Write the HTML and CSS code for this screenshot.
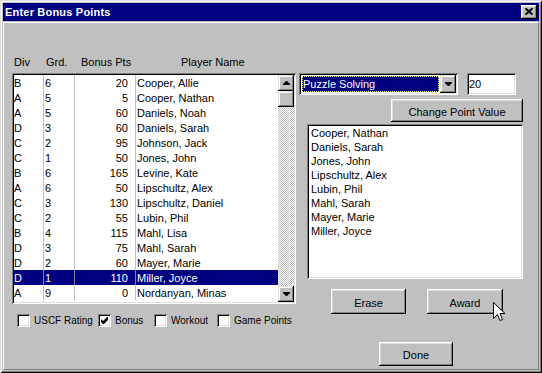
FILE: index.html
```html
<!DOCTYPE html>
<html>
<head>
<meta charset="utf-8">
<title>Enter Bonus Points</title>
<link rel="stylesheet" href="styles.css">
</head>
<body>
<div class="window">
  <div class="titlebar">
    <span class="title">Enter Bonus Points</span>
    <span class="close"><svg width="8" height="7" viewBox="0 0 8 7"><path d="M0.5 0.3 L7.5 6.7 M7.5 0.3 L0.5 6.7" stroke="#000" stroke-width="1.9" fill="none"/></svg></span>
  </div>
  <div class="client">
    <div class="left">
      <div class="hdr">
        <span class="h-div">Div</span><span class="h-grd">Grd.</span><span class="h-pts">Bonus Pts</span><span class="h-name">Player Name</span>
      </div>
      <div class="listbox">
        <div class="rows">
          <div class="row"><span class="c-div">B</span><span class="c-grd">6</span><span class="c-pts">20</span><span class="c-name">Cooper, Allie</span></div>
          <div class="row"><span class="c-div">A</span><span class="c-grd">5</span><span class="c-pts">5</span><span class="c-name">Cooper, Nathan</span></div>
          <div class="row"><span class="c-div">A</span><span class="c-grd">5</span><span class="c-pts">60</span><span class="c-name">Daniels, Noah</span></div>
          <div class="row"><span class="c-div">D</span><span class="c-grd">3</span><span class="c-pts">60</span><span class="c-name">Daniels, Sarah</span></div>
          <div class="row"><span class="c-div">C</span><span class="c-grd">2</span><span class="c-pts">95</span><span class="c-name">Johnson, Jack</span></div>
          <div class="row"><span class="c-div">C</span><span class="c-grd">1</span><span class="c-pts">50</span><span class="c-name">Jones, John</span></div>
          <div class="row"><span class="c-div">B</span><span class="c-grd">6</span><span class="c-pts">165</span><span class="c-name">Levine, Kate</span></div>
          <div class="row"><span class="c-div">A</span><span class="c-grd">6</span><span class="c-pts">50</span><span class="c-name">Lipschultz, Alex</span></div>
          <div class="row"><span class="c-div">C</span><span class="c-grd">3</span><span class="c-pts">130</span><span class="c-name">Lipschultz, Daniel</span></div>
          <div class="row"><span class="c-div">C</span><span class="c-grd">2</span><span class="c-pts">55</span><span class="c-name">Lubin, Phil</span></div>
          <div class="row"><span class="c-div">B</span><span class="c-grd">4</span><span class="c-pts">115</span><span class="c-name">Mahl, Lisa</span></div>
          <div class="row"><span class="c-div">D</span><span class="c-grd">3</span><span class="c-pts">75</span><span class="c-name">Mahl, Sarah</span></div>
          <div class="row"><span class="c-div">D</span><span class="c-grd">2</span><span class="c-pts">60</span><span class="c-name">Mayer, Marie</span></div>
          <div class="row selected"><span class="c-div">D</span><span class="c-grd">1</span><span class="c-pts">110</span><span class="c-name">Miller, Joyce</span></div>
          <div class="row"><span class="c-div">A</span><span class="c-grd">9</span><span class="c-pts">0</span><span class="c-name">Nordanyan, Minas</span></div>
        </div>
        <div class="vscroll">
          <div class="sbtn"><svg width="7" height="4" viewBox="0 0 7 4"><path d="M3 0h1l3 3v1H0V3z" fill="#000"/></svg></div>
          <div class="track"><div class="thumb"></div></div>
          <div class="sbtn"><svg width="7" height="4" viewBox="0 0 7 4"><path d="M0 0h7v1L4 4H3L0 1z" fill="#000"/></svg></div>
        </div>
      </div>
      <div class="checks">
        <label class="chk"><span class="box"></span><span class="lbl">USCF Rating</span></label>
        <label class="chk"><span class="box"><svg width="7" height="7" viewBox="0 0 7 7"><path d="M0 2 L2 4 L6 0 H7 V3 L3 7 H2 L0 5z" fill="#000"/></svg></span><span class="lbl">Bonus</span></label>
        <label class="chk"><span class="box"></span><span class="lbl">Workout</span></label>
        <label class="chk"><span class="box"></span><span class="lbl">Game Points</span></label>
      </div>
    </div>
    <div class="right">
      <div class="r-top">
        <div class="combo">
          <div class="combo-sel"><span>Puzzle Solving</span></div>
          <div class="combo-btn"><svg width="7" height="4" viewBox="0 0 7 4"><path d="M0 0h7v1L4 4H3L0 1z" fill="#000"/></svg></div>
        </div>
        <div class="textbox">20</div>
      </div>
      <div class="btn cpv">Change Point Value</div>
      <div class="list2">
        <div class="item">Cooper, Nathan</div>
        <div class="item">Daniels, Sarah</div>
        <div class="item">Jones, John</div>
        <div class="item">Lipschultz, Alex</div>
        <div class="item">Lubin, Phil</div>
        <div class="item">Mahl, Sarah</div>
        <div class="item">Mayer, Marie</div>
        <div class="item">Miller, Joyce</div>
      </div>
      <div class="btn-row">
        <div class="btn erase">Erase</div>
        <div class="btn award">Award</div>
      </div>
      <div class="btn done">Done</div>
    </div>
  </div>
  <svg class="cursor" width="13" height="21" viewBox="0 0 13 21"><path d="M0.5 0.5 L0.5 16.5 L4.5 12.5 L7 18.5 L9.5 17.5 L7 11.5 L12 11.5 Z" fill="#fff" stroke="#000" stroke-width="1" stroke-linejoin="miter"/></svg>
</div>
</body>
</html>
```

FILE: styles.css
```css
html, body {
  margin: 0;
  padding: 0;
  background: #c0c0c0;
}

body {
  font-family: "Liberation Sans", Arial, sans-serif;
  font-size: 11px;
  color: #000;
}

.window {
  position: relative;
  box-sizing: border-box;
  width: 542px;
  height: 373px;
  padding: 3px;
  background: #c0c0c0;
  box-shadow: inset 1px 1px #dfdfdf, inset -1px -1px #000, inset 2px 2px #fff, inset -2px -2px #808080;
  display: flex;
  flex-direction: column;
}

.titlebar {
  height: 18px;
  flex: none;
  background: #000080;
  display: flex;
  align-items: center;
  justify-content: space-between;
  padding: 0 2px 0 2px;
}

.title {
  color: #fff;
  font-weight: bold;
  font-size: 11px;
  line-height: 18px;
  letter-spacing: 0.2px;
}

.close {
  box-sizing: border-box;
  width: 16px;
  height: 14px;
  background: #c0c0c0;
  box-shadow: inset -1px -1px #000, inset 1px 1px #fff, inset -2px -2px #808080, inset 2px 2px #dfdfdf;
  display: flex;
  align-items: center;
  justify-content: center;
  padding-bottom: 1px;
}

.close svg { display: block; }

.client {
  flex: 1;
  margin-top: 1px;
  border-top: 1px solid #fff;
  border-left: 1px solid #fff;
  border-right: 1px solid #808080;
  border-bottom: 1px solid #808080;
  padding: 33px 0 0 8px;
  display: flex;
  align-items: flex-start;
}

.left {
  width: 284px;
  flex: none;
}

.hdr {
  height: 17px;
  line-height: 13px;
  display: grid;
  grid-template-columns: 29px 31px 61px 143px;
  padding-left: 2px;
  white-space: nowrap;
}

.h-grd { padding-left: 3px; }
.h-pts { padding-left: 7px; }
.h-name { padding-left: 46px; }

.listbox {
  box-sizing: border-box;
  width: 284px;
  height: 231px;
  padding: 2px;
  background: #fff;
  box-shadow: inset 1px 1px #808080, inset -1px -1px #fff, inset 2px 2px #000, inset -2px -2px #dfdfdf;
  display: flex;
}

.rows {
  width: 264px;
  background: #fff;
}

.row {
  box-sizing: border-box;
  height: 15px;
  padding-top: 2px;
  line-height: 13px;
  display: grid;
  grid-template-columns: 29px 31px 61px 143px;
  white-space: nowrap;
}

.row > span { height: 15px; margin-top: -2px; padding-top: 2px; box-sizing: border-box; }

.c-grd, .c-pts, .c-name { border-left: 1px solid #c0c0c0; }
.c-grd { padding-left: 1px; }
.c-pts { text-align: right; padding-right: 7px; }
.c-name { padding-left: 1px; }

.row.selected {
  background: #000080;
  color: #fff;
}

.row.selected .c-grd, .row.selected .c-pts, .row.selected .c-name { border-left-color: #8080a0; }

.vscroll {
  width: 16px;
  display: flex;
  flex-direction: column;
}

.sbtn, .thumb, .combo-btn {
  box-sizing: border-box;
  background: #c0c0c0;
  box-shadow: inset -1px -1px #000, inset 1px 1px #dfdfdf, inset -2px -2px #808080, inset 2px 2px #fff;
  display: flex;
  align-items: center;
  justify-content: center;
}

.sbtn {
  width: 16px;
  height: 16px;
  flex: none;
}

.sbtn svg, .combo-btn svg { display: block; }

.track {
  flex: 1;
  background-image: repeating-conic-gradient(#c0c0c0 0% 25%, #fff 0% 50%);
  background-size: 2px 2px;
}

.thumb {
  width: 16px;
  height: 16px;
}

.checks {
  margin-top: 10px;
  padding-left: 5px;
  display: grid;
  grid-template-columns: 81px 56px 63px auto;
  align-items: center;
}

.chk {
  display: flex;
  align-items: center;
  gap: 4px;
  white-space: nowrap;
}

.box {
  box-sizing: border-box;
  width: 13px;
  height: 13px;
  background: #fff;
  box-shadow: inset 1px 1px #808080, inset -1px -1px #fff, inset 2px 2px #000, inset -2px -2px #dfdfdf;
  display: flex;
  align-items: center;
  justify-content: center;
  flex: none;
}

.box svg { display: block; }

.lbl {
  font-size: 10px;
  line-height: 13px;
}

.right {
  width: 224px;
  flex: none;
  margin-left: 3px;
  margin-top: 17px;
  display: flex;
  flex-direction: column;
  align-items: flex-start;
}

.r-top {
  display: flex;
}

.combo {
  box-sizing: border-box;
  width: 159px;
  height: 22px;
  padding: 2px;
  background: #fff;
  box-shadow: inset 1px 1px #808080, inset -1px -1px #fff, inset 2px 2px #000, inset -2px -2px #dfdfdf;
  display: flex;
}

.combo-sel {
  flex: 1;
  margin: 1px 1px 1px 1px;
  background: #000080;
  color: #fff;
  outline: 1px dotted #ffff80;
  outline-offset: -1px;
  line-height: 15px;
  padding: 1px 0 0 1px;
  white-space: nowrap;
}

.combo-btn {
  width: 16px;
  height: 18px;
  flex: none;
}

.textbox {
  box-sizing: border-box;
  width: 49px;
  height: 22px;
  margin-left: 9px;
  padding: 4px 0 0 2px;
  line-height: 14px;
  background: #fff;
  box-shadow: inset 1px 1px #808080, inset -1px -1px #fff, inset 2px 2px #000, inset -2px -2px #dfdfdf;
}

.btn {
  box-sizing: border-box;
  background: #c0c0c0;
  box-shadow: inset -1px -1px #000, inset 1px 1px #fff, inset -2px -2px #808080, inset 2px 2px #dfdfdf;
  display: flex;
  align-items: center;
  justify-content: center;
  padding-top: 2px;
  white-space: nowrap;
}

.cpv {
  width: 132px;
  height: 23px;
  margin-top: 4px;
  margin-left: 92px;
}

.list2 {
  box-sizing: border-box;
  width: 216px;
  height: 155px;
  margin-top: 2px;
  margin-left: 8px;
  padding: 2px 2px 2px 4px;
  background: #fff;
  box-shadow: inset 1px 1px #808080, inset -1px -1px #fff, inset 2px 2px #000, inset -2px -2px #dfdfdf;
}

.item {
  height: 14px;
  line-height: 14px;
  white-space: nowrap;
}

.btn-row {
  display: flex;
  margin-top: 10px;
}

.erase {
  width: 75px;
  height: 25px;
  margin-left: 32px;
}

.award {
  width: 76px;
  height: 25px;
  margin-left: 21px;
}

.done {
  width: 74px;
  height: 24px;
  margin-top: 28px;
  margin-left: 80px;
}

.cursor {
  position: absolute;
  left: 493px;
  top: 302px;
  display: block;
}
```
